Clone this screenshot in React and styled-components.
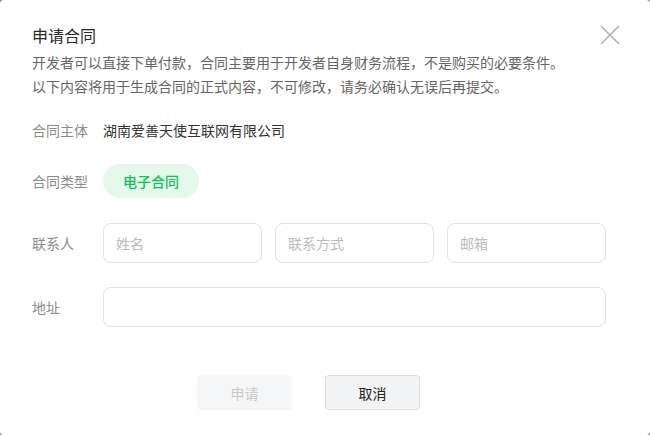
import React from "react";
import styled, { createGlobalStyle } from "styled-components";

const GlobalStyle = createGlobalStyle`
  html, body {
    margin: 0;
    padding: 0;
    background: #8a8a8a;
  }
  body {
    font-family: "Noto Sans CJK SC", "Noto Sans", sans-serif;
  }
`;

const Dialog = styled.div`
  position: relative;
  box-sizing: border-box;
  width: 650px;
  height: 435px;
  background: #fff;
  border-radius: 4px;
  padding: 24px 32px 0 32px;
  overflow: hidden;
`;

const Title = styled.h2`
  margin: 0;
  font-size: 16px;
  line-height: 22px;
  font-weight: 400;
  color: #2a2a2a;
`;

const Desc = styled.p`
  margin: 4px 0 0 0;
  font-size: 14px;
  line-height: 24px;
  color: #666;
`;

const CloseButton = styled.button`
  position: absolute;
  top: 24px;
  right: 29px;
  width: 22px;
  height: 22px;
  padding: 0;
  border: none;
  background: none;
  display: flex;
  align-items: center;
  justify-content: center;
  cursor: pointer;
`;

const Row = styled.div`
  display: flex;
  align-items: center;
  margin-top: ${(p) => p.$top}px;
  height: ${(p) => p.$height}px;
`;

const Label = styled.div`
  width: 71px;
  flex-shrink: 0;
  font-size: 14px;
  color: #8c8c8c;
`;

const Value = styled.div`
  font-size: 14px;
  color: #333;
`;

const Pill = styled.div`
  height: 34px;
  padding: 0 20px;
  border-radius: 17px;
  background: #e5f8ec;
  color: #14c05a;
  font-size: 14px;
  font-weight: 500;
  display: flex;
  align-items: center;
`;

const Fields = styled.div`
  display: flex;
  gap: 13px;
  width: 503px;
`;

const Input = styled.input`
  box-sizing: border-box;
  flex: 1;
  min-width: 0;
  height: 40px;
  border: 1px solid #e2e2e2;
  border-radius: 8px;
  padding: 0 12px;
  font-family: inherit;
  font-size: 14px;
  color: #333;
  outline: none;
  &::placeholder {
    color: #bbb;
  }
`;

const Actions = styled.div`
  display: flex;
  gap: 33px;
  margin-top: 48px;
  padding-left: 165px;
`;

const Button = styled.button`
  box-sizing: border-box;
  width: 95px;
  height: 35px;
  border-radius: 4px;
  font-family: inherit;
  font-size: 14px;
  background: ${(p) => (p.$disabled ? "#f5f6f7" : "#f3f4f5")};
  color: ${(p) => (p.$disabled ? "#c8c8c8" : "#222")};
  border: 1px solid ${(p) => (p.$disabled ? "#f5f6f7" : "#dcdcdc")};
  cursor: ${(p) => (p.$disabled ? "not-allowed" : "pointer")};
`;

function CloseIcon() {
  return (
    <svg width="20" height="20" viewBox="0 0 20 20">
      <path d="M1 1 L19 19 M19 1 L1 19" stroke="#b0b0b0" strokeWidth="1.6" fill="none" />
    </svg>
  );
}

export default function App() {
  return (
    <>
      <GlobalStyle />
      <Dialog>
        <Title>申请合同</Title>
        <Desc>
          开发者可以直接下单付款，合同主要用于开发者自身财务流程，不是购买的必要条件。
          <br />
          以下内容将用于生成合同的正式内容，不可修改，请务必确认无误后再提交。
        </Desc>
        <CloseButton aria-label="关闭">
          <CloseIcon />
        </CloseButton>

        <Row $top={22} $height={20}>
          <Label>合同主体</Label>
          <Value>湖南爱善天使互联网有限公司</Value>
        </Row>

        <Row $top={24} $height={34}>
          <Label>合同类型</Label>
          <Pill>电子合同</Pill>
        </Row>

        <Row $top={25} $height={40}>
          <Label>联系人</Label>
          <Fields>
            <Input placeholder="姓名" />
            <Input placeholder="联系方式" />
            <Input placeholder="邮箱" />
          </Fields>
        </Row>

        <Row $top={24} $height={40}>
          <Label>地址</Label>
          <Fields>
            <Input />
          </Fields>
        </Row>

        <Actions>
          <Button $disabled disabled>
            申请
          </Button>
          <Button>取消</Button>
        </Actions>
      </Dialog>
    </>
  );
}
